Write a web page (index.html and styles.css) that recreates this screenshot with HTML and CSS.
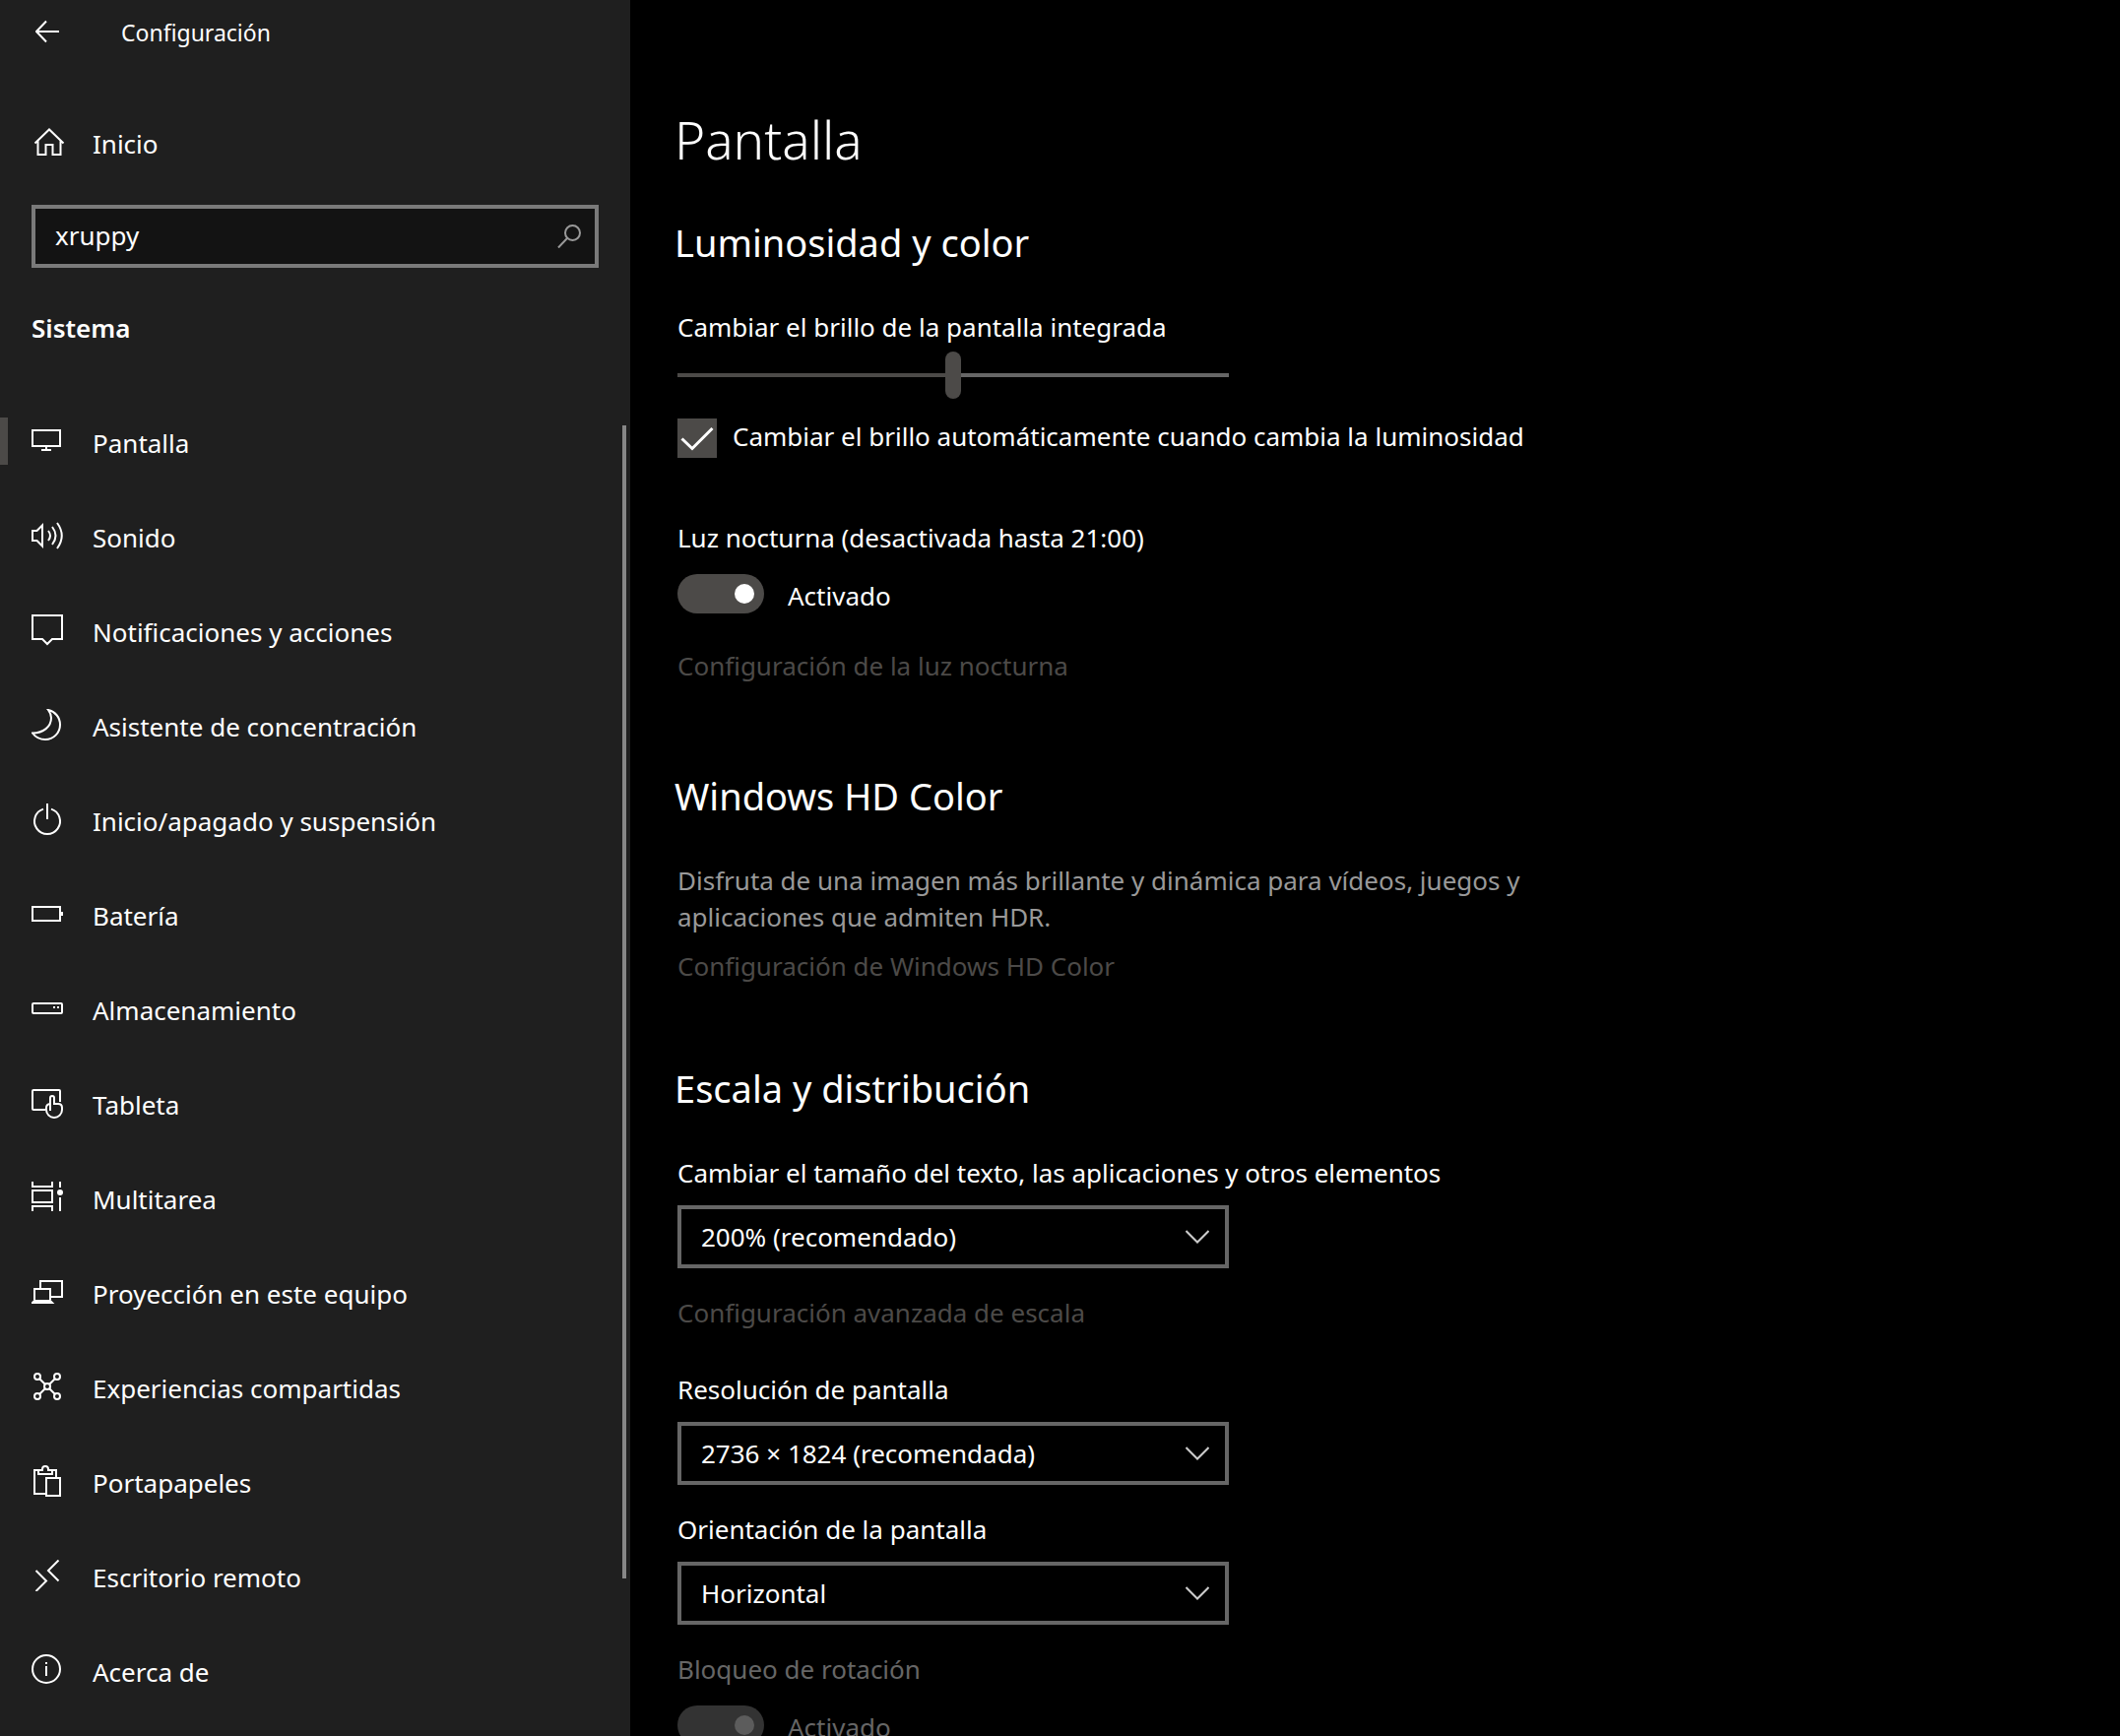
FILE: index.html
```html
<!DOCTYPE html>
<html lang="es">
<head>
<meta charset="utf-8">
<meta name="viewport" content="width=device-width, initial-scale=1">
<title>Configuración</title>
<link rel="stylesheet" href="styles.css">
</head>
<body>
<div class="app">
  <aside class="sidebar">
    <header class="titlebar">
      <button class="back" type="button" aria-label="Atrás">
        <svg class="line" width="24" height="24" viewBox="0 0 24 24"><path d="M1 12H24M11 1.500L1 12l10 10.500"/></svg>
      </button>
      <span class="titlebar-text">Configuración</span>
    </header>
    <a class="home" href="#inicio">
      <svg class="line" width="32" height="32" viewBox="0 0 32 32"><path d="M1.500 17.500L16 3.500l14.500 14M4.500 15v14H12.500V19h7v10h8V15"/></svg>
      <span>Inicio</span>
    </a>
    <div class="search">
      <input class="search-input" type="search" value="xruppy" aria-label="Buscar una configuración">
      <svg class="search-icon" width="24" height="24" viewBox="0 0 24 24"><circle cx="15.500" cy="8.500" r="7.500"/><path d="M10 14L1 23.500"/></svg>
    </div>
    <h2 class="category">Sistema</h2>
    <div class="nav-area">
      <nav class="nav">
        <a class="nav-item current" href="#pantalla" aria-current="page">
          <svg class="line" width="32" height="32" viewBox="0 0 32 32"><path d="M1 5h28v16H1zM15 21v4M10 25h10"/></svg>
          <span>Pantalla</span></a>
        <a class="nav-item" href="#sonido">
          <svg class="line" width="32" height="32" viewBox="0 0 32 32"><path d="M1 11h4.500L11 5.500v21L5.500 21H1zM17 11q4 5 0 10M21 7q7 9 0 18M26 3q9.500 13 0 26"/></svg>
          <span>Sonido</span></a>
        <a class="nav-item" href="#notificaciones">
          <svg class="line" width="32" height="32" viewBox="0 0 32 32"><path d="M1 1h30v24H21l-5 5-5-5H1z"/></svg>
          <span>Notificaciones y acciones</span></a>
        <a class="nav-item" href="#concentracion">
          <svg class="line" width="32" height="32" viewBox="0 0 32 32"><path d="M17 1C24 2.500 29 8.500 29 16A15 15 0 0 1 14 31C8.500 31 4 28.500 1 24.500C12 24.500 20 18 20 9C20 6 18.500 3 17 1z"/></svg>
          <span>Asistente de concentración</span></a>
        <a class="nav-item" href="#energia">
          <svg class="line" width="32" height="32" viewBox="0 0 32 32"><path d="M12 5.600A13 13 0 1 0 20 5.600M16 0v16"/></svg>
          <span>Inicio/apagado y suspensión</span></a>
        <a class="nav-item" href="#bateria">
          <svg class="line" width="32" height="32" viewBox="0 0 32 32"><path d="M1 9h28v14H1zM31 14v4"/></svg>
          <span>Batería</span></a>
        <a class="nav-item" href="#almacenamiento">
          <svg class="line" width="32" height="32" viewBox="0 0 32 32"><rect x="1" y="11" width="30" height="10" rx="1"/><path d="M22 15h2M26 15h2"/></svg>
          <span>Almacenamiento</span></a>
        <a class="nav-item" href="#tableta">
          <svg class="line" width="32" height="32" viewBox="0 0 32 32"><path d="M14 23H2q-1 0-1-1V4q0-1 1-1h26q1 0 1 1v11"/><path d="M19 24V11a2 2 0 0 1 4 0v6h4q4 0 4 4v2a8 8 0 0 1-16 0v-2q0-3.500 4-4"/></svg>
          <span>Tableta</span></a>
        <a class="nav-item" href="#multitarea">
          <svg class="line" width="32" height="32" viewBox="0 0 32 32"><path d="M1 0v5h20V0M1 9h20v12H1zM1 30v-5h20v5M29 0v6M29 16v14"/><circle class="fill" cx="29" cy="11" r="3"/></svg>
          <span>Multitarea</span></a>
        <a class="nav-item" href="#proyeccion">
          <svg class="line" width="32" height="32" viewBox="0 0 32 32"><path d="M9 12V5h22v16H20M3 24V13h16v11M3 25h16l2 2H1z"/></svg>
          <span>Proyección en este equipo</span></a>
        <a class="nav-item" href="#experiencias">
          <svg class="line" width="32" height="32" viewBox="0 0 32 32"><circle cx="6" cy="6" r="3"/><circle cx="26" cy="6" r="3"/><circle cx="6" cy="26" r="3"/><circle cx="26" cy="26" r="3"/><circle cx="16" cy="16" r="3"/><path d="M8 8l6 6M24 8l-6 6M8 24l6-6M24 24l-6-6"/></svg>
          <span>Experiencias compartidas</span></a>
        <a class="nav-item" href="#portapapeles">
          <svg class="line" width="32" height="32" viewBox="0 0 32 32"><path d="M14 29H3V5h4M21 5h4v7M7 5h4V4a3 3 0 0 1 6 0v1h4v4H7zM15 13h14v18H15z"/></svg>
          <span>Portapapeles</span></a>
        <a class="nav-item" href="#escritorio">
          <svg class="line" width="32" height="32" viewBox="0 0 32 32"><path d="M4.500 11L15 21.500L4.500 32M27.500 0.500L17 11l10.500 10.500"/></svg>
          <span>Escritorio remoto</span></a>
        <a class="nav-item" href="#acerca">
          <svg class="line" width="32" height="32" viewBox="0 0 32 32"><circle cx="15" cy="15" r="14"/><path d="M15 8v2M15 12v10"/></svg>
          <span>Acerca de</span></a>
      </nav>
      <div class="scroll-track"><div class="scroll-thumb"></div></div>
    </div>
  </aside>

  <main class="content">
    <h1 class="page-title">Pantalla</h1>

    <section class="section">
      <h2 class="section-title">Luminosidad y color</h2>
      <label class="label" for="brillo">Cambiar el brillo de la pantalla integrada</label>
      <input class="slider" id="brillo" type="range" min="0" max="100" value="50">
      <div class="check-row">
        <span class="check">
          <input class="check-input" id="auto" type="checkbox" checked>
          <svg class="check-mark" width="40" height="40" viewBox="0 0 40 40"><path d="M4.500 20.500l10.500 10L35.500 10"/></svg>
        </span>
        <label class="label" for="auto">Cambiar el brillo automáticamente cuando cambia la luminosidad</label>
      </div>
      <div class="label night-label" id="luz-label">Luz nocturna (desactivada hasta 21:00)</div>
      <div class="toggle-row">
        <input class="toggle" id="luz" type="checkbox" role="switch" checked aria-labelledby="luz-label">
        <label class="toggle-text" for="luz">Activado</label>
      </div>
      <a class="link night-link" href="#luz-nocturna">Configuración de la luz nocturna</a>
    </section>

    <section class="section section-hd">
      <h2 class="section-title">Windows HD Color</h2>
      <p class="description">Disfruta de una imagen más brillante y dinámica para vídeos, juegos y aplicaciones que admiten HDR.</p>
      <a class="link hd-link" href="#hd-color">Configuración de Windows HD Color</a>
    </section>

    <section class="section section-scale">
      <h2 class="section-title">Escala y distribución</h2>
      <div class="field">
        <label class="label" for="escala">Cambiar el tamaño del texto, las aplicaciones y otros elementos</label>
        <div class="select">
          <select class="select-input" id="escala"><option>200% (recomendado)</option></select>
          <svg class="chevron" width="24" height="14" viewBox="0 0 24 14"><path d="M0.500 1L12 12.500L23.500 1"/></svg>
        </div>
      </div>
      <a class="link scale-link" href="#escala-avanzada">Configuración avanzada de escala</a>
      <div class="field field-resolution">
        <label class="label" for="resolucion">Resolución de pantalla</label>
        <div class="select">
          <select class="select-input" id="resolucion"><option>2736 × 1824 (recomendada)</option></select>
          <svg class="chevron" width="24" height="14" viewBox="0 0 24 14"><path d="M0.500 1L12 12.500L23.500 1"/></svg>
        </div>
      </div>
      <div class="field field-next">
        <label class="label" for="orientacion">Orientación de la pantalla</label>
        <div class="select">
          <select class="select-input" id="orientacion"><option>Horizontal</option></select>
          <svg class="chevron" width="24" height="14" viewBox="0 0 24 14"><path d="M0.500 1L12 12.500L23.500 1"/></svg>
        </div>
      </div>
      <div class="field-next disabled">
        <div class="label" id="bloqueo-label">Bloqueo de rotación</div>
        <div class="toggle-row">
          <input class="toggle" id="bloqueo" type="checkbox" role="switch" checked disabled aria-labelledby="bloqueo-label">
          <label class="toggle-text" for="bloqueo">Activado</label>
        </div>
      </div>
    </section>
  </main>
</div>
</body>
</html>
```
FILE: styles.css
```css
:root {
  --accent: #4c4a48;
  --border: #666666;
  --text: #ffffff;
}

* {
  box-sizing: border-box;
}

body {
  margin: 0;
  background: #000000;
  color: var(--text);
  font-family: "Noto Sans", "Segoe UI", "Open Sans", sans-serif;
  font-size: 26px;
  line-height: 36px;
}

h1,
h2,
p {
  margin: 0;
}

a {
  color: inherit;
  text-decoration: none;
}

input,
select,
button {
  margin: 0;
  font: inherit;
  color: inherit;
}

svg {
  display: block;
  flex: none;
  fill: none;
}

.line {
  stroke: #ffffff;
  stroke-width: 2;
}

.line .fill {
  fill: #ffffff;
  stroke: none;
}

.app {
  display: flex;
  height: 100vh;
  overflow: hidden;
}

/* Sidebar */

.sidebar {
  display: flex;
  flex-direction: column;
  flex: none;
  width: 640px;
  background: #1f1f1f;
}

.titlebar {
  display: flex;
  align-items: center;
  height: 64px;
}

.back {
  display: flex;
  align-items: center;
  justify-content: center;
  width: 96px;
  height: 64px;
  padding: 0;
  border: 0;
  background: none;
}

.titlebar-text {
  padding-top: 2px;
  padding-left: 27px;
  font-size: 23px;
  line-height: 32px;
}

.home {
  display: flex;
  align-items: center;
  gap: 28px;
  height: 96px;
  margin-top: 32px;
  padding-left: 34px;
}

.home span,
.nav-item span {
  padding-top: 4px;
}

.search {
  display: grid;
  align-items: center;
  margin: 16px 32px 0;
}

.search-input {
  grid-area: 1 / 1;
  width: 100%;
  height: 64px;
  padding: 0 64px 2px 20px;
  border: 4px solid #7a7a7a;
  border-radius: 0;
  background: #131313;
  appearance: none;
  outline: 0;
}

.search-icon {
  grid-area: 1 / 1;
  justify-self: end;
  margin-right: 18px;
  stroke: #999999;
  stroke-width: 2;
}

.category {
  margin: 43px 32px 49px;
  font-size: 26px;
  font-weight: 600;
}

.nav-area {
  display: flex;
  flex: 1;
  min-height: 0;
}

.nav {
  flex: 1;
}

.nav-item {
  display: flex;
  align-items: center;
  gap: 30px;
  height: 96px;
  padding-left: 24px;
  border-left: 8px solid transparent;
}

.current {
  border-image: linear-gradient(transparent 25%, var(--accent) 25% 75%, transparent 75%) 1;
  border-image-slice: 0 0 0 8;
}

.scroll-track {
  width: 8px;
  margin-top: 32px;
}

.scroll-thumb {
  width: 4px;
  height: 88%;
  background: #868686;
}

/* Content */

.content {
  flex: 1;
  min-width: 0;
  padding: 104px 48px 0;
}

.page-title,
.section-title {
  margin-left: -3px;
}

.page-title {
  font-size: 53px;
  font-weight: 300;
  line-height: 76px;
}

.section {
  display: flex;
  flex-direction: column;
  align-items: flex-start;
  margin-top: 40px;
}

.section-hd {
  margin-top: 88px;
}

.section-scale {
  margin-top: 80px;
}

.section-title {
  margin-bottom: 42px;
  font-size: 38px;
  font-weight: 400;
  line-height: 52px;
}

.slider {
  width: 560px;
  height: 48px;
  margin-top: 7px;
  background: none;
  appearance: none;
}

.slider::-webkit-slider-runnable-track {
  height: 4px;
  background: linear-gradient(to right, var(--accent) 50%, var(--border) 50%);
}

.slider::-webkit-slider-thumb {
  width: 16px;
  height: 48px;
  margin-top: -22px;
  border-radius: 8px;
  background: var(--accent);
  appearance: none;
}

.check-row {
  display: flex;
  gap: 16px;
  margin-top: 20px;
}

.check {
  display: grid;
  height: 40px;
}

.check-input {
  grid-area: 1 / 1;
  width: 40px;
  height: 40px;
  background: var(--accent);
  appearance: none;
}

.check-mark {
  grid-area: 1 / 1;
  stroke: #ffffff;
  stroke-width: 3;
  pointer-events: none;
}

.night-label {
  margin-top: 63px;
}

.toggle-row {
  display: flex;
  align-items: center;
  gap: 24px;
  margin-top: 19px;
}

.toggle {
  display: flex;
  align-items: center;
  justify-content: flex-end;
  width: 88px;
  height: 40px;
  padding-right: 10px;
  border-radius: 20px;
  background: var(--accent);
  appearance: none;
}

.toggle::before {
  width: 20px;
  height: 20px;
  border-radius: 50%;
  background: #ffffff;
  content: "";
}

.toggle-text {
  height: 40px;
  padding-top: 4px;
}

.link {
  color: var(--accent);
}

.night-link {
  margin-top: 35px;
}

.description {
  max-width: 880px;
  color: #999999;
  line-height: 37px;
}

.hd-link {
  margin-top: 13px;
}

.field {
  display: flex;
  flex-direction: column;
  gap: 15px;
}

.field-resolution {
  margin-top: 42px;
}

.field-next {
  margin-top: 27px;
}

.scale-link {
  margin-top: 27px;
}

.select {
  display: grid;
  align-items: center;
  width: 560px;
}

.select-input {
  grid-area: 1 / 1;
  height: 64px;
  padding: 0 64px 0 20px;
  border: 4px solid var(--border);
  border-radius: 0;
  background: #000000;
  appearance: none;
}

.chevron {
  grid-area: 1 / 1;
  justify-self: end;
  margin-right: 20px;
  stroke: #cccccc;
  stroke-width: 2;
  pointer-events: none;
}

.disabled {
  color: #666666;
}

.disabled .toggle {
  background: #333333;
}

.disabled .toggle::before {
  background: #5c5c5c;
}
```
